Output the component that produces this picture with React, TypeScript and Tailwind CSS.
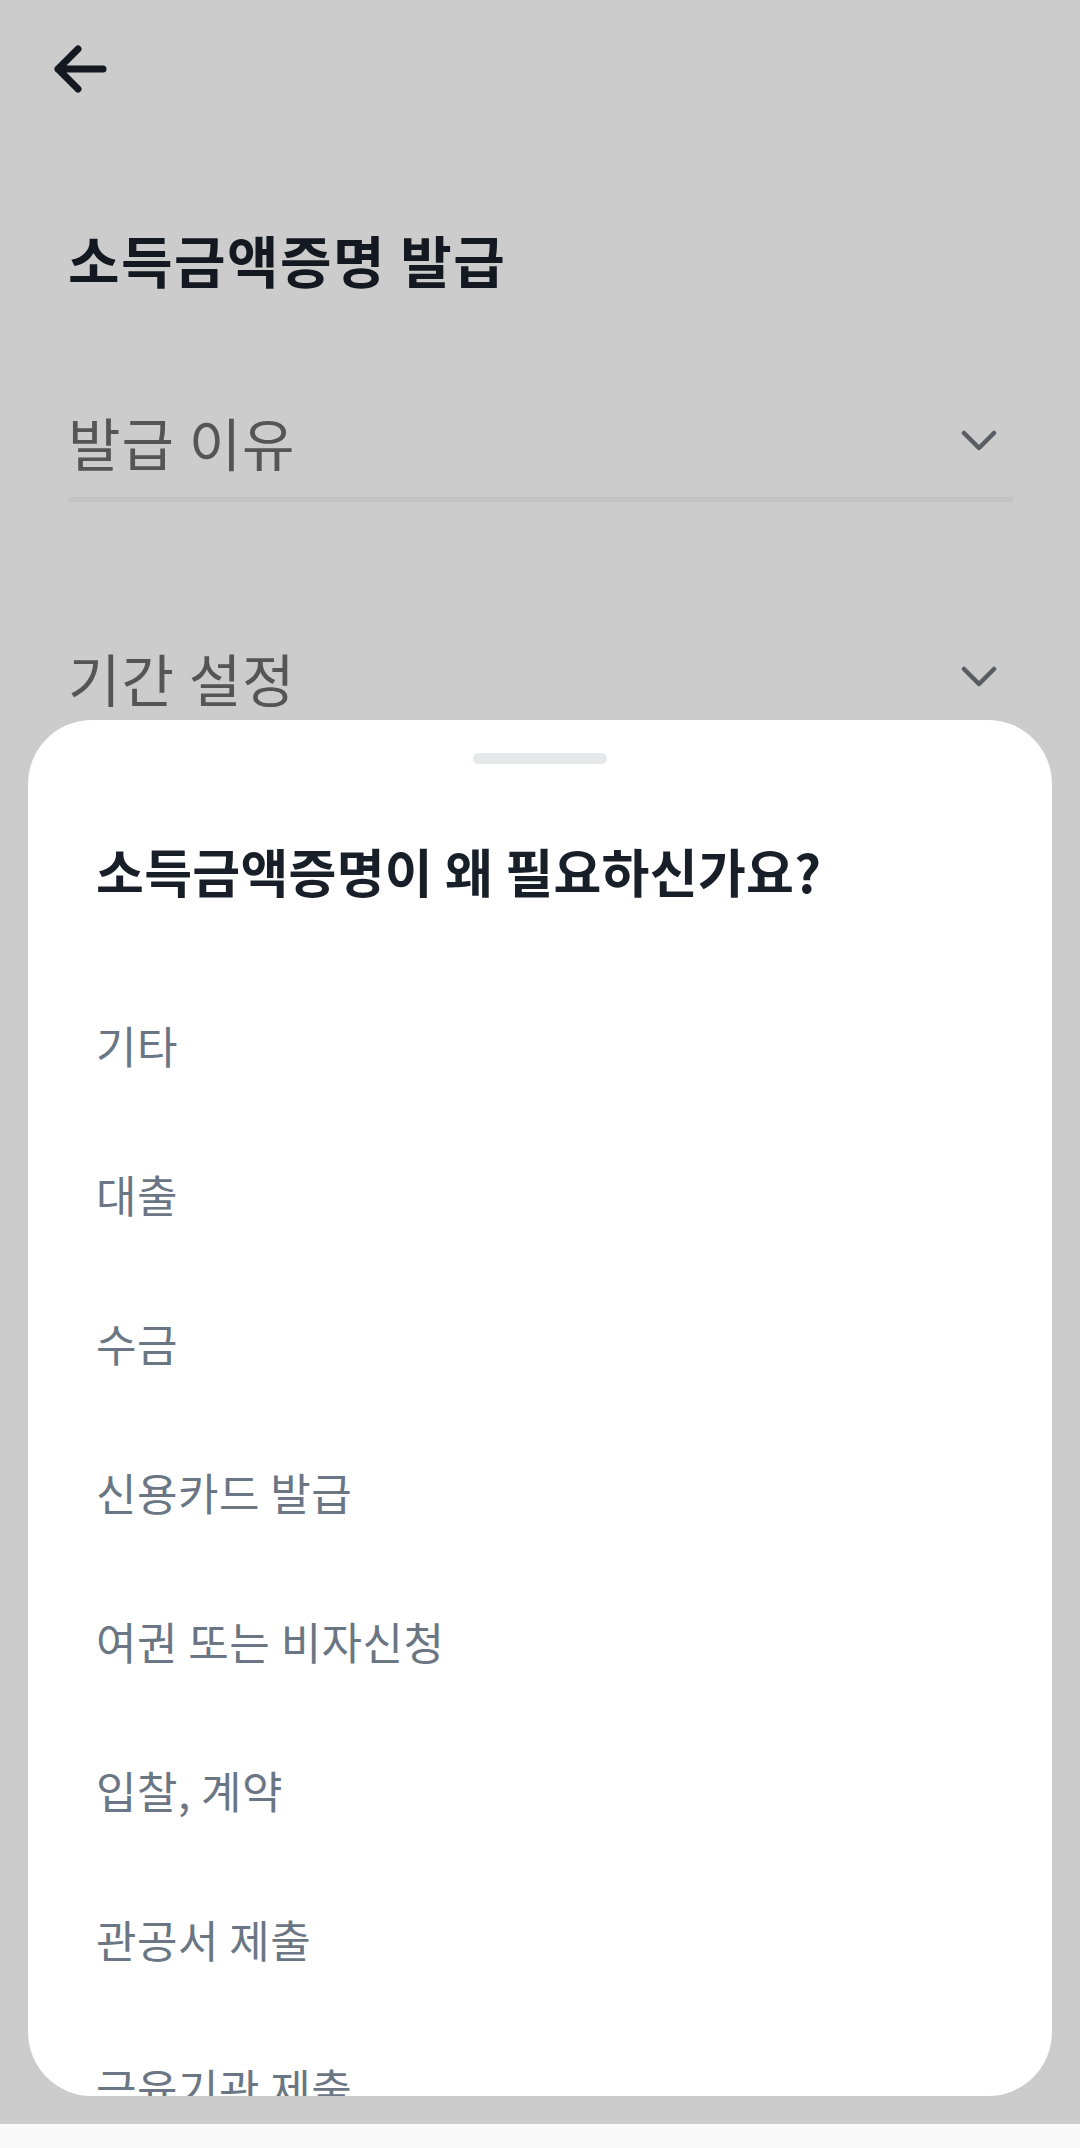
import React from 'react';

const reasons = [
  '기타',
  '대출',
  '수금',
  '신용카드 발급',
  '여권 또는 비자신청',
  '입찰, 계약',
  '관공서 제출',
  '금융기관 제출',
];

const Chevron: React.FC = () => (
  <svg width="36" height="22" viewBox="0 0 36 22" fill="none" className="mr-[16px] shrink-0" aria-hidden="true">
    <path d="M3 3L18 18L33 3" stroke="#70737a" strokeWidth="4.5" strokeLinecap="round" strokeLinejoin="round" />
  </svg>
);

const SelectField: React.FC<{ label: string; className?: string }> = ({ label, className }) => (
  <div className={className}>
    <div className="flex items-center justify-between">
      <span className="text-[57px] leading-[64px] tracking-[1px] text-[#6b6b6b]">{label}</span>
      <Chevron />
    </div>
    <div className="mt-[24px] h-[5px] bg-[#f4f4f4]" />
  </div>
);

const App: React.FC = () => {
  return (
    <div className="flex h-[2148px] w-full flex-col bg-white font-['Noto_Sans_CJK_KR','Noto_Sans',sans-serif]">
      <div className="relative flex-1 overflow-hidden">
        {/* page behind the sheet */}
        <header className="flex h-[138px] items-center px-[52px]">
          <svg width="58" height="48" viewBox="0 0 58 48" fill="none" aria-label="뒤로">
            <path d="M51 24H6M26 4L6 24L26 44" stroke="#191f28" strokeWidth="7" strokeLinecap="round" strokeLinejoin="round" />
          </svg>
        </header>

        <main className="pr-[67px] pl-[68px]">
          <h1 className="mt-[89px] text-[56px] font-bold leading-[64px] tracking-[1.5px] text-[#191f28]">
            소득금액증명 발급
          </h1>
          <SelectField label="발급 이유" className="mt-[118px]" />
          <SelectField label="기간 설정" className="mt-[143px]" />
        </main>

        {/* dim + bottom sheet */}
        <div className="absolute inset-0 flex flex-col justify-end bg-black/20 px-[28px] pb-[28px]">
          <div className="h-[1376px] overflow-hidden rounded-[64px] bg-white">
            <div className="pt-[33px]">
              <div className="mx-auto h-[11px] w-[134px] rounded-full bg-[#e5e8eb]" />
            </div>
            <h2 className="mt-[76px] px-[68px] text-[52px] font-bold leading-[62px] tracking-[0.3px] text-[#191f28]">
              소득금액증명이 왜 필요하신가요?
            </h2>
            <ul className="mt-[68px]">
              {reasons.map((r) => (
                <li key={r} className="flex h-[149px] items-center px-[68px] text-[44px] tracking-[0.5px] text-[#6b7684]">
                  {r}
                </li>
              ))}
            </ul>
          </div>
        </div>
      </div>
      <div className="h-[24px] bg-[#f9f9f9]" />
    </div>
  );
};

export default App;
